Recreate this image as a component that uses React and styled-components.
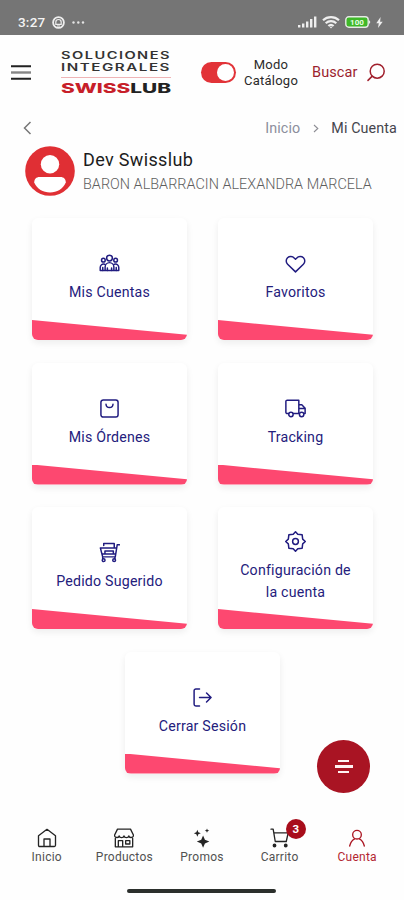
import React from 'react';
import styled, { createGlobalStyle } from 'styled-components';

const GlobalStyle = createGlobalStyle`
  * {
    box-sizing: border-box;
  }
  body {
    margin: 0;
    background: #fff;
    font-family: Roboto, "Liberation Sans", sans-serif;
  }
`

const Screen = styled.div`
  width: 404px;
  height: 900px;
  display: flex;
  flex-direction: column;
  overflow: hidden;
  background: #fefefe;
`

const StatusBar = styled.div`
  height: 35px;
  flex: none;
  display: flex;
  justify-content: space-between;
  align-items: center;
  padding: 9px 21px 0 18px;
  background: #757575;
  color: #f4f4f4;
`
const StatusGroup = styled.div`
  display: flex;
  align-items: center;
  gap: ${props => props.$gap}px;
`
const Clock = styled.span`
  font-size: 13.5px;
  font-weight: 500;
  letter-spacing: 0.2px;
`

const Header = styled.header`
  height: 75px;
  flex: none;
  display: flex;
  align-items: center;
  padding-left: 11px;
`
const Logo = styled.svg`
  display: block;
  margin: 0 29px 0 30px;
`
const Toggle = styled.div`
  width: 35px;
  height: 21px;
  padding: 2px;
  display: flex;
  justify-content: flex-end;
  border-radius: 11px;
  background: #e23338;
`
const Knob = styled.span`
  width: 17px;
  height: 17px;
  border-radius: 50%;
  background: #fff;
`
const ModeLabel = styled.div`
  width: 62px;
  margin: 0 0 0 4px;
  text-align: center;
  font-size: 13px;
  line-height: 16px;
  letter-spacing: 0.25px;
  color: #2b2b2b;
`
const SearchLink = styled.div`
  display: flex;
  align-items: center;
  gap: 9px;
  margin-left: 10px;
  font-size: 14.5px;
  letter-spacing: 0.1px;
  color: #9c1f2e;
`

const Breadcrumb = styled.nav`
  height: 36px;
  flex: none;
  display: flex;
  align-items: center;
  padding: 0 7px 0 23px;
  font-size: 14.3px;
  letter-spacing: 0.12px;
  color: #45454d;
`
const Parent = styled.span`
  margin-left: auto;
  color: #8c8e9c;
`
const Divider = styled.svg`
  margin: 0 12px 0 13px;
`

const User = styled.div`
  height: 50px;
  flex: none;
  display: flex;
  align-items: center;
  gap: 8px;
  padding-left: 25px;
`
const UserDetails = styled.div`
  padding-top: 3px;
`
const UserName = styled.div`
  font-size: 18px;
  line-height: 24px;
  letter-spacing: 0.35px;
  color: #1c1c1c;
`
const UserCompany = styled.div`
  font-size: 14.4px;
  font-weight: 300;
  line-height: 25px;
  letter-spacing: 0.03px;
  white-space: nowrap;
  color: #5e5e5e;
`

const Cards = styled.main`
  display: flex;
  flex-wrap: wrap;
  justify-content: center;
  gap: 22.5px 31px;
  padding: 22px 30px 0 31px;
`
const CardStyles = styled.a`
  width: 155px;
  height: 122px;
  display: flex;
  flex-direction: column;
  border-radius: 6px;
  overflow: hidden;
  background: #fff;
  box-shadow: 0 3px 7px rgba(0, 0, 0, 0.07);
`
const CardBody = styled.div`
  height: 102px;
  padding-top: ${props => props.$tall ? 24 : 35}px;
  display: flex;
  flex-direction: column;
  align-items: center;
  gap: 7px;
`
const CardTitle = styled.div`
  width: 122px;
  text-align: center;
  font-size: 14.2px;
  line-height: 22px;
  letter-spacing: 0.2px;
  color: #24207c;
`
const CardAccent = styled.div`
  height: 20px;
  background: #fd4870;
  clip-path: polygon(0 0, 100% 74%, 100% 100%, 0 100%);
`

const Footer = styled.footer`
  margin-top: auto;
  display: flex;
  flex-direction: column;
  align-items: center;
`
const Tabs = styled.nav`
  width: 100%;
  display: grid;
  grid-template-columns: repeat(5, 1fr);
  padding: 0 8px;
`
const TabItem = styled.div`
  position: relative;
  height: 61px;
  display: flex;
  flex-direction: column;
  align-items: center;
  font-size: 12px;
  line-height: 15px;
  letter-spacing: 0.25px;
  color: ${props => props.$active ? '#b32632' : '#515151'};
`
const TabIcon = styled.span`
  height: 22px;
  color: ${props => props.$active ? '#ab1622' : '#242424'};
`
const Badge = styled.span`
  position: absolute;
  top: -9px;
  left: 45px;
  width: 20px;
  height: 20px;
  border-radius: 50%;
  text-align: center;
  font-size: 11.5px;
  font-weight: 700;
  line-height: 20px;
  letter-spacing: 0;
  background: #a80d1b;
  color: #fff;
`
const HomeBar = styled.div`
  width: 149px;
  height: 4px;
  margin: 0 2px 7px 0;
  border-radius: 2px;
  background: #2b2f2c;
`
const FloatingButton = styled.button`
  position: absolute;
  left: 317px;
  top: 740px;
  width: 53px;
  height: 53px;
  padding: 0;
  display: flex;
  flex-direction: column;
  align-items: center;
  justify-content: center;
  gap: 3px;
  border: 0;
  border-radius: 50%;
  background: #a91423;
`
const FabLine = styled.span`
  width: ${props => props.$width}px;
  height: 2.3px;
  background: #fff3f3;
`

const Icon = ({ size = 21, stroke = 1.7, children }) => (
  <svg
    width={size}
    height={size}
    viewBox="0 0 24 24"
    fill="none"
    stroke="currentColor"
    strokeWidth={stroke}
    strokeLinecap="round"
    strokeLinejoin="round"
    style={{ display: 'block' }}
  >
    {children}
  </svg>
);

const CardIcon = styled.span`
  color: #211c80;
`

const icons = {
  people: (
    <>
      <circle cx="12" cy="5.8" r="3.3" />
      <circle cx="5" cy="8.2" r="2.1" />
      <circle cx="19" cy="8.2" r="2.1" />
      <path d="M7 20v-4a5 5 0 0 1 10 0v4zM6.4 12.8C3.6 12 1.4 14 1.4 16.6V20h21.2v-3.4c0-2.6-2.2-4.6-5-3.8" />
      <path d="M4.3 16.6V20M19.7 16.6V20M9.6 17V20M14.4 17V20" />
    </>
  ),
  heart: <path d="M12 21.6 3 12.8A5.2 5.2 0 0 1 2.9 5.4c2.1-2 5.7-1.9 7.6.3L12 7.2l1.5-1.5c1.9-2.2 5.5-2.3 7.6-.3a5.2 5.2 0 0 1-.1 7.4z" />,
  order: (
    <>
      <rect x="2.2" y="2.2" width="19.6" height="19.6" rx="2.6" />
      <path d="M8 7.2c.4 5 7.6 5 8 0" />
    </>
  ),
  truck: (
    <>
      <path d="M4.2 17.8H2.6a1.6 1.6 0 0 1-1.6-1.6V4.1C1 3.2 1.7 2.5 2.6 2.5h13.2v15.3H9.4M15.8 7.8h3.4l3.8 4v6h-1.4M15.8 11.9H23" />
      <circle cx="6.8" cy="18.8" r="2.5" />
      <circle cx="19" cy="18.8" r="2.5" />
    </>
  ),
  suggested: (
    <>
      <path d="M23.4 3.2h-2.6L18.6 17H4.2L1.6 6.8h18.6M5.4 4V1.8h12V6.8M6.8 10.2h9.6v3.6H6.8zM4.2 13.8h14.6M4.2 17v2M18.2 17v2" />
      <circle cx="5.3" cy="20.8" r="1.6" />
      <circle cx="17.3" cy="20.8" r="1.6" />
    </>
  ),
  settings: (
    <>
      <path d="M12 .9 14.6 3.8 19.6 4.4 20.2 9.3 23.2 12 20.2 14.7 19.6 19.6 14.6 20.2 12 23.1 9.4 20.2 4.4 19.6 3.8 14.7.8 12 3.8 9.3 4.4 4.4 9.4 3.8z" />
      <circle cx="12" cy="12" r="3.3" />
    </>
  ),
  logout: <path d="M8.6 2.2H4.4a2 2 0 0 0-2 2v15.6a2 2 0 0 0 2 2h4.2M8.6 12h13.2M16.6 6.8l5.2 5.2-5.2 5.2" />,
  home: <path d="M1.8 20.8V9.3L12 1.6l10.2 7.7v11.5c0 .8-.6 1.4-1.4 1.4H3.2c-.8 0-1.4-.6-1.4-1.4zM8.4 22.2v-9h7.2v9" />,
  store: (
    <>
      <path d="M4.2 1.4h15.6l3.6 7.2c0 3.6-5.2 3.6-5.6.8-.6 2.8-5.2 2.8-5.8 0-.6 2.8-5.2 2.8-5.8 0-.4 2.8-5.6 2.8-5.6-.8zM1.6 12.6v10h20.8v-10M5.2 22.4v-7.2h5.2v7.2" />
      <path d="M14 15.2h5v4h-5z" />
    </>
  ),
  sparkles: (
    <g fill="currentColor" stroke="none">
      <path d="M13.3 9 15.5 14.2 20.8 16.3 15.5 18.5 13.3 23.6 11.1 18.5 5.8 16.3 11.1 14.2z" />
      <path d="M6.4 2 7.6 5 10.6 6.2 7.6 7.4 6.4 10.4 5.2 7.4 2.2 6.2 5.2 5z" />
      <path d="M18 .6 18.8 2.4 20.7 3.2 18.8 4 18 5.8 17.2 4 15.3 3.2 17.2 2.4z" />
    </g>
  ),
  cart: (
    <>
      <path d="M1.2 1.4h2.6l2.5 14.8h13.2l2.3-10.4H4.6" />
      <circle cx="5.4" cy="21" r="1.5" fill="currentColor" />
      <circle cx="18.9" cy="21" r="1.5" fill="currentColor" />
    </>
  ),
  account: (
    <>
      <circle cx="12" cy="8" r="5.2" />
      <path d="M3.2 21.6c1-4.4 2.8-7 6-8.6M20.8 21.6c-1-4.4-2.8-7-6-8.6" />
    </>
  ),
};

const cards = [
  { title: 'Mis Cuentas', icon: 'people' },
  { title: 'Favoritos', icon: 'heart' },
  { title: 'Mis Órdenes', icon: 'order' },
  { title: 'Tracking', icon: 'truck' },
  { title: 'Pedido Sugerido', icon: 'suggested' },
  { title: 'Configuración de la cuenta', icon: 'settings', tall: true },
  { title: 'Cerrar Sesión', icon: 'logout' },
];

const tabs = [
  { label: 'Inicio', icon: 'home' },
  { label: 'Productos', icon: 'store' },
  { label: 'Promos', icon: 'sparkles' },
  { label: 'Carrito', icon: 'cart', badge: 3 },
  { label: 'Cuenta', icon: 'account', active: true },
];

const Card = ({ card }) => (
  <CardStyles>
    <CardBody $tall={card.tall}>
      <CardIcon>
        <Icon>{icons[card.icon]}</Icon>
      </CardIcon>
      <CardTitle>{card.title}</CardTitle>
    </CardBody>
    <CardAccent />
  </CardStyles>
);

const Tab = ({ tab }) => (
  <TabItem $active={tab.active}>
    <TabIcon $active={tab.active}>
      <Icon size={20} stroke={1.6}>{icons[tab.icon]}</Icon>
    </TabIcon>
    {tab.label}
    {tab.badge && <Badge>{tab.badge}</Badge>}
  </TabItem>
);

const BrandLogo = () => (
  <Logo width="111" height="48" viewBox="0 -2 111 48" fontFamily="Inter, sans-serif" overflow="visible">
    <text x="0" y="8" fontSize="9.8" fontWeight="600" letterSpacing="1" textLength="110" lengthAdjust="spacingAndGlyphs" fill="#333">SOLUCIONES</text>
    <text x="0" y="20.3" fontSize="9.8" fontWeight="600" letterSpacing="1" textLength="110" lengthAdjust="spacingAndGlyphs" fill="#333">INTEGRALES</text>
    <path d="M0 26.5h110" stroke="#efb4b6" />
    <text x="0" y="42" fontSize="13.4" fontWeight="800" textLength="110" lengthAdjust="spacingAndGlyphs" fill="#222">
      <tspan fill="#c71f2a">SWISS</tspan>LUB
    </text>
  </Logo>
);

const StatusIcons = () => (
  <StatusGroup $gap={5}>
    <svg width="19" height="12" viewBox="0 0 19 12" fill="#eee">
      <path d="M0 9h2.4v2.5H0zM4 7.5h2.4v4H4zM8 5.5h2.4v6H8zM12 3h2.4v8.5H12zM16 .5h2.4v11H16z" />
    </svg>
    <svg width="18" height="13" viewBox="0 0 18 13" fill="none" stroke="#eee" strokeWidth="2.2">
      <path d="M1 4.2c4.5-4.1 11.5-4.1 16 0M3.7 7.2c3-2.8 7.6-2.8 10.6 0M6.4 10c1.5-1.4 3.7-1.4 5.2 0" />
      <path d="m9 12.5-1.5-1.8h3z" fill="#eee" stroke="none" />
    </svg>
    <svg width="26" height="12" viewBox="0 0 26 12">
      <rect x=".8" y=".8" width="22.4" height="10.4" rx="3" fill="#3fb829" stroke="#e6e9e5" strokeWidth="1.4" />
      <path d="M24 4.2c1.7.4 1.7 3.2 0 3.6z" fill="#e6e9e5" />
      <text x="12" y="9" textAnchor="middle" fontSize="8" fontWeight="700" fill="#e9ffe5">100</text>
    </svg>
    <svg width="7" height="11" viewBox="0 0 7 11" fill="#eee">
      <path d="M4.6 0 .3 6.2h2.5L2 11l4.7-6.3H4.1z" />
    </svg>
  </StatusGroup>
);

const App = () => {
  return (
    <Screen>
      <GlobalStyle />
      <StatusBar>
        <StatusGroup $gap={7}>
          <Clock>3:27</Clock>
          <svg width="13" height="13" viewBox="0 0 13 13" fill="none" stroke="#eee">
            <circle cx="6.5" cy="6.5" r="5.4" strokeWidth="1.8" />
            <path d="M3.8 8.3V6.2a2.7 2.7 0 0 1 5.4 0v2.1zM5 10h3" strokeWidth="1.2" />
          </svg>
          <svg width="13" height="3" viewBox="0 0 13 3" fill="#e4e4e4">
            <circle cx="1.5" cy="1.5" r="1.2" />
            <circle cx="6.3" cy="1.5" r="1.2" />
            <circle cx="11" cy="1.5" r="1.2" />
          </svg>
        </StatusGroup>
        <StatusIcons />
      </StatusBar>

      <Header>
        <svg width="20" height="15" viewBox="0 0 20 15">
          <path d="M0 1.2h20M0 13.8h20" stroke="#222" strokeWidth="2" />
          <path d="M0 7.5h20" stroke="#868686" strokeWidth="2.4" />
        </svg>
        <BrandLogo />
        <Toggle><Knob /></Toggle>
        <ModeLabel>Modo Catálogo</ModeLabel>
        <SearchLink>
          Buscar
          <svg width="19" height="19" viewBox="0 0 19 19" fill="none" stroke="#a01f2c" strokeWidth="1.5" strokeLinecap="round">
            <circle cx="10.2" cy="8.2" r="7" />
            <path d="m5 13.4-4 4" />
          </svg>
        </SearchLink>
      </Header>

      <Breadcrumb>
        <svg width="9" height="14" viewBox="0 0 9 14" fill="none" stroke="#777" strokeWidth="1.5">
          <path d="M7.5 1 1.5 7l6 6" />
        </svg>
        <Parent>Inicio</Parent>
        <Divider width="6" height="9" viewBox="0 0 6 9" fill="none" stroke="#8d8d94" strokeWidth="1.1">
          <path d="m1 1 3.8 3.5L1 8" />
        </Divider>
        <span>Mi Cuenta</span>
      </Breadcrumb>

      <User>
        <svg width="50" height="50" viewBox="0 0 50 50">
          <circle cx="25" cy="25" r="24.8" fill="#e02f34" />
          <circle cx="25" cy="18.2" r="9.2" fill="#fff" />
          <path d="M9.2 36.5c0-3.4 2-5.5 5.4-5.5h20.8c3.4 0 5.4 2.1 5.4 5.5C38 43 32 46.4 25 46.4S12 43 9.2 36.5z" fill="#fff" />
        </svg>
        <UserDetails>
          <UserName>Dev Swisslub</UserName>
          <UserCompany>BARON ALBARRACIN ALEXANDRA MARCELA</UserCompany>
        </UserDetails>
      </User>

      <Cards>
        {cards.map(card => <Card key={card.title} card={card} />)}
      </Cards>

      <Footer>
        <Tabs>
          {tabs.map(tab => <Tab key={tab.label} tab={tab} />)}
        </Tabs>
        <HomeBar />
      </Footer>

      <FloatingButton aria-label="Filtros">
        <FabLine $width={11} />
        <FabLine $width={18} />
        <FabLine $width={11} />
      </FloatingButton>
    </Screen>
  );
};

export default App;
